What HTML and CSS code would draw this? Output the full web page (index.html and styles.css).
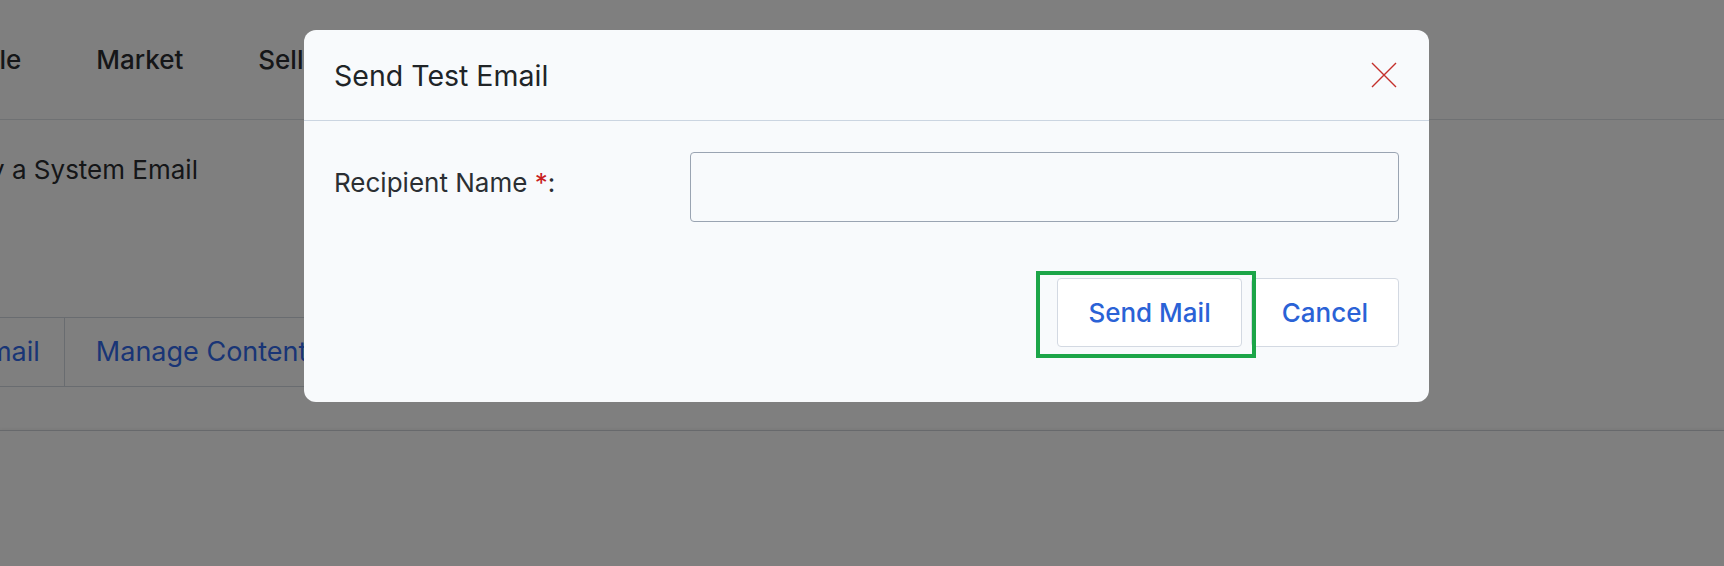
FILE: index.html
```html
<!DOCTYPE html>
<html>

<head>
    <meta charset="utf-8">
    <title>Send Test Email</title>
    <link rel="stylesheet" href="styles.css">
</head>

<body>

<div class="page">
    <ul class="topnav">
        <li>Bundle</li>
        <li>Market</li>
        <li>Sell</li>
        <li>Reports</li>
    </ul>
    <div class="content">
        <h2 class="pageTitle">Copy a System Email</h2>
        <ul class="tabs">
            <li>Test Email</li>
            <li>Manage Content</li>
            <li>Preview</li>
        </ul>
    </div>
    <div class="pageFoot"></div>
</div>

<div class="overlay">
    <div class="modal">
        <div class="modalHead">
            <h3>Send Test Email</h3>
            <span class="btnClose">
                <svg width="26" height="26" viewBox="0 0 26 26">
                    <path d="M1 1 L25 25 M25 1 L1 25" stroke="#c4302b" stroke-width="1.4" fill="none"/>
                </svg>
            </span>
        </div>
        <div class="modalBody">
            <div class="field">
                <label>Recipient Name <span class="req">*</span>:</label>
                <input type="text" class="txt">
            </div>
        </div>
        <div class="modalFoot">
            <div class="sendWrap">
                <button class="btn">Send Mail</button>
                <span class="focusBox"></span>
            </div>
            <button class="btn">Cancel</button>
        </div>
    </div>
</div>

</body>

</html>
```

FILE: styles.css
```css
html,
body,
ul,
li,
h2,
h3 {
    margin: 0;
    padding: 0;
    border: 0;
    list-style: none;
}

body {
    font-family: Inter, "Noto Sans", sans-serif;
    background: #fff;
    color: #1f2328;
    overflow: hidden;
}

/* page behind the dialog */
.topnav {
    display: flex;
    gap: 75px;
    height: 119px;
    align-items: center;
    margin-left: -65px;
    border-bottom: 1px solid #dfe2e6;
    font-size: 26px;
    font-weight: 500;
    color: #2a2c30;
}

.pageTitle {
    margin: 34px 0 0 -60px;
    font-size: 26px;
    line-height: 32px;
    font-weight: 400;
    color: #2a2d31;
}

.tabs {
    display: inline-flex;
    margin: 131px 0 0 -121px;
    border-top: 1px solid #d3d8e0;
    border-bottom: 1px solid #d3d8e0;
}

.tabs li {
    height: 68px;
    line-height: 68px;
    padding: 0 24px 0 31px;
    border-right: 1px solid #d3d8e0;
    font-size: 27px;
    color: #336bec;
    white-space: nowrap;
}

.pageFoot {
    margin-top: 43px;
    border-top: 1px solid #cfd3d8;
    box-shadow: 0 -1px 3px rgba(0, 0, 0, 0.12);
}

/* dialog */
.overlay {
    position: fixed;
    top: 0;
    left: 0;
    right: 0;
    bottom: 0;
    background: rgba(0, 0, 0, 0.5);
    padding: 30px 0 0 304px;
}

.modal {
    width: 1125px;
    background: #f8fafc;
    border-radius: 12px;
}

.modalHead {
    display: flex;
    align-items: center;
    justify-content: space-between;
    height: 90px;
    padding: 0 32px 0 30px;
    border-bottom: 1px solid #cbd5e1;
}

.modalHead h3 {
    font-size: 28.5px;
    font-weight: 400;
    color: #202427;
}

.btnClose {
    display: flex;
    width: 26px;
    height: 26px;
}

.modalBody {
    padding: 31px 30px 0;
}

.field {
    display: flex;
    align-items: center;
}

.field label {
    width: 356px;
    font-size: 26px;
    color: #2b2f33;
    margin-top: -9px;
}

.req {
    color: #c81e1e;
}

.txt {
    flex: 1;
    height: 70px;
    box-sizing: border-box;
    border: 1px solid #9aa4b2;
    border-radius: 4px;
    background: transparent;
}

.modalFoot {
    display: flex;
    justify-content: flex-end;
    gap: 9px;
    padding: 56px 30px 55px;
}

.sendWrap {
    position: relative;
    display: flex;
}

.btn {
    height: 69px;
    padding: 0 30px;
    border: 1px solid #d3d9e2;
    border-radius: 4px;
    background: #fff;
    font-family: Inter, "Noto Sans", sans-serif;
    font-size: 26px;
    font-weight: 500;
    color: #2a62d6;
}

.focusBox {
    position: absolute;
    top: -7px;
    left: -21px;
    right: -14px;
    bottom: -11px;
    border: 4px solid #1ca548;
}
```
